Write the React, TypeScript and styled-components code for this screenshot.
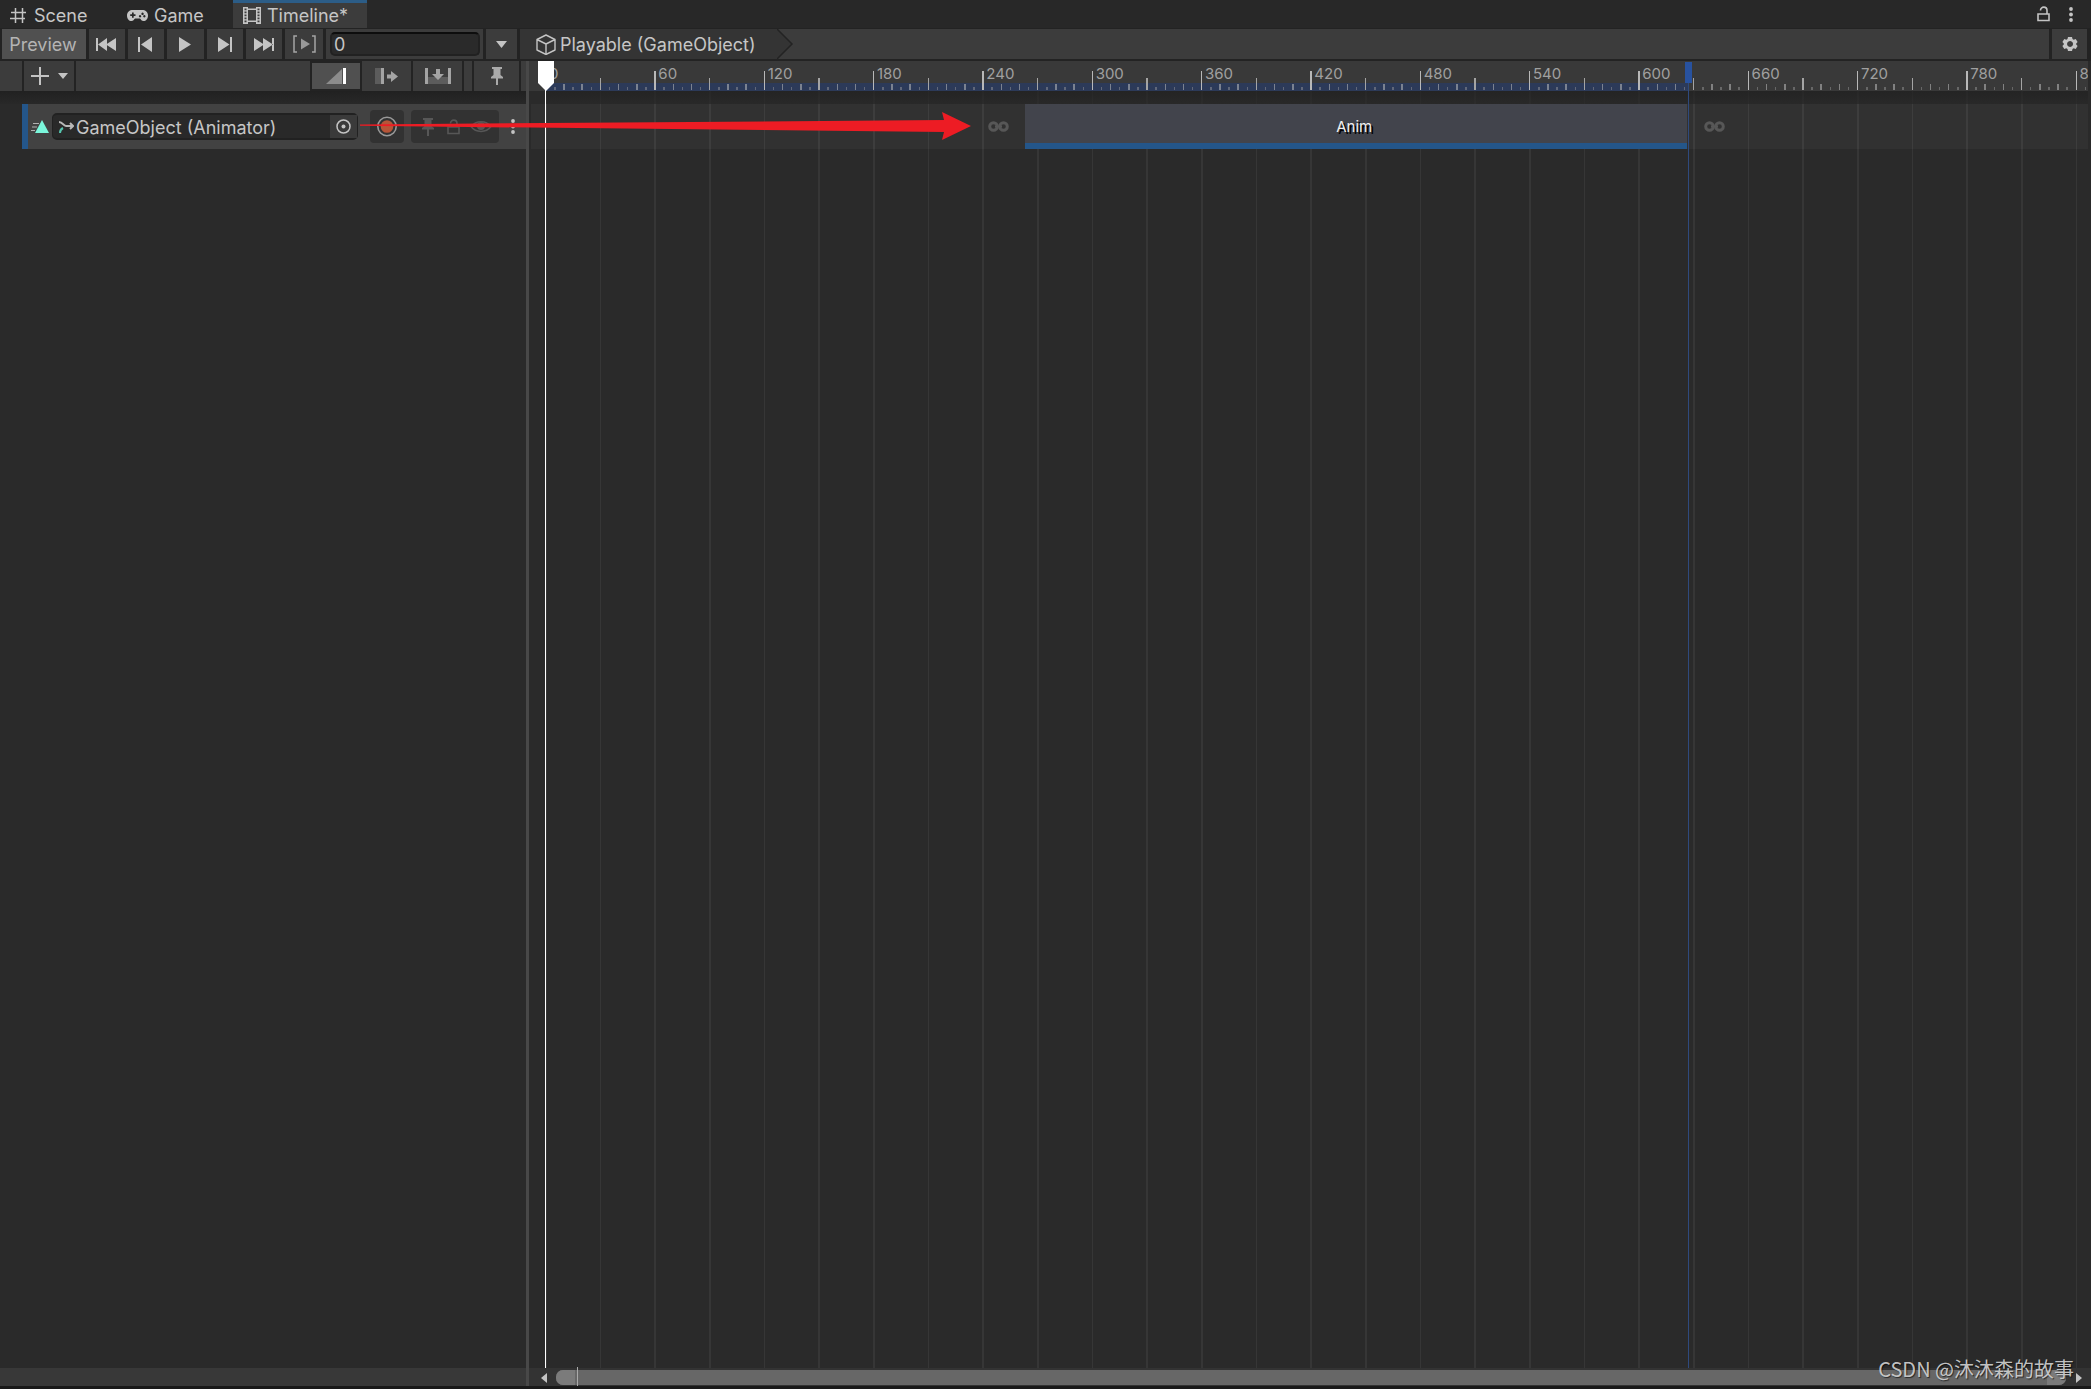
import React from "react";
import styled, { createGlobalStyle } from "styled-components";

const VISIBLE_FRAMES = 846.7;
const SEGMENT = 60;
const CLIP = { start: 263.4, end: 626.9, name: "Anim" };
const DURATION = 627.2;
const pct = (frames: number) => `${(frames / VISIBLE_FRAMES) * 100}%`;
const SEGMENTS = Array.from({ length: 15 }, (_, i) => i * SEGMENT);

const c = {
  bar: "#3c3c3c",
  gap: "#232323",
  body: "#2a2a2a",
  lit: "#505050",
  text: "#c6c6c6",
  icon: "#c4c4c4",
  accent: "#24568a",
};

const Global = createGlobalStyle`
  * { box-sizing: border-box; }
  body { margin: 0; background: #191919; }
  button, input { font: inherit; color: inherit; border: 0; padding: 0; margin: 0; background: none; }
  svg { display: block; flex: none; }
`;

const Window = styled.div`
  position: relative;
  display: flex;
  flex-direction: column;
  min-height: 100vh;
  padding-bottom: 3px;
  overflow: hidden;
  background: #191919;
  color: ${c.text};
  font: 18px/24px Inter, "Noto Sans CJK SC", sans-serif;
`;

const Tabs = styled.div`
  display: flex;
  height: 28px;
  padding-right: 13px;
  background: #282828;
`;
const Tab = styled.button<{ $active?: boolean; $width: number }>`
  display: flex;
  align-items: center;
  gap: 6px;
  width: ${(p) => p.$width}px;
  height: 28px;
  padding: 3px 0 0 10px;
  white-space: nowrap;
  background: ${(p) => (p.$active ? c.bar : "transparent")};
  box-shadow: ${(p) => (p.$active ? "inset 0 3px 0 #2c5d87" : "none")};
`;
const TabTools = styled.div`
  display: flex;
  align-items: center;
  gap: 14px;
  margin-left: auto;
`;
const IconButton = styled.button`
  display: grid;
  place-items: center;
`;

const Toolbar = styled.div`
  display: flex;
  gap: 3px;
  height: 33px;
  padding: 1px 4px 2px 2px;
  background: ${c.gap};
`;
const ToolButton = styled.button<{ $width: number; $lit?: boolean }>`
  display: grid;
  place-items: center;
  flex: none;
  width: ${(p) => p.$width}px;
  background: ${(p) => (p.$lit ? c.lit : c.bar)};
`;
const PreviewButton = styled(ToolButton)`
  padding: 2px 2px 0 0;
  color: #b4b4b4;
`;
const FrameSlot = styled.label`
  display: flex;
  flex: none;
  width: 157px;
  padding: 3px 3px 3px 4px;
  background: ${c.bar};
`;
const FrameInput = styled.input`
  width: 100%;
  border: 2px solid #212121;
  border-top-color: #0d0d0d;
  border-radius: 5px;
  background: #2a2a2a;
  padding: 2px 0 0 2px;
`;
const Crumbs = styled.nav`
  display: flex;
  flex: 1;
  min-width: 0;
  background: ${c.bar};
`;
const Crumb = styled.a`
  display: flex;
  align-items: center;
  gap: 4px;
  width: 257px;
  padding: 1px 0 0 16px;
  background: #343434;
  color: inherit;
  text-decoration: none;
  white-space: nowrap;
`;

const Main = styled.div`
  display: flex;
  flex: 1;
`;
const Side = styled.div`
  display: flex;
  flex-direction: column;
  flex: none;
  width: 526px;
  background: ${c.body};
`;
const Divider = styled.div`
  flex: none;
  width: 3px;
  background: #484848;
`;
const SideTools = styled.div`
  display: flex;
  gap: 2px;
  height: 30px;
  background: ${c.gap};
`;
const Filler = styled.div<{ $width?: number }>`
  flex: ${(p) => (p.$width ? "none" : 1)};
  width: ${(p) => (p.$width ? `${p.$width}px` : "auto")};
  background: ${c.bar};
`;
const ModeButton = styled(ToolButton)`
  background-clip: content-box;
  padding: ${(p) => (p.$lit ? "2px 0" : "0")};
`;
const Shade = styled.div`
  height: 13px;
  background: linear-gradient(#212121, #282828);
`;
const TrackHeader = styled.div`
  display: flex;
  align-items: center;
  height: 45px;
  margin-left: 22px;
  padding: 0 6px 0 3px;
  border-left: 6px solid ${c.accent};
  background: #424242;
`;
const Binding = styled.label`
  display: flex;
  align-items: center;
  width: 306px;
  height: 27px;
  margin-left: 3px;
  padding-left: 6px;
  border: 2px solid #212121;
  border-width: 2px 1px;
  border-radius: 5px;
  background: #292929;
`;
const BindingInput = styled.input`
  flex: 1;
  min-width: 0;
  height: 23px;
  padding-top: 2px;
  margin-left: 2px;
`;
const Picker = styled(IconButton)`
  width: 27px;
  height: 23px;
  background: #3a3a3a;
`;
const Chip = styled.div`
  display: flex;
  align-items: center;
  justify-content: center;
  gap: 9px;
  height: 33px;
  padding: 0 7px;
  border-radius: 4px;
  background: #323232;
`;
const RecordChip = styled(Chip)`
  margin: 0 7px 0 12px;
`;
const Menu = styled(IconButton)`
  margin-left: auto;
  width: 14px;
`;
const SideFoot = styled.div`
  height: 18px;
  margin-top: auto;
  background: #383838;
`;

const Pane = styled.div`
  display: flex;
  flex-direction: column;
  flex: 1;
  min-width: 0;
  background: ${c.body};
`;
const Canvas = styled.div`
  position: relative;
  flex: 1;
  margin: 0 3px 0 16px;
`;
const Ruler = styled.div`
  position: relative;
  height: 30px;
  margin: 0 0 0 -16px;
  padding-left: 16px;
  background: #393939;
`;
const Scale = styled.div`
  position: relative;
  display: flex;
  height: 30px;
  overflow: hidden;
`;
const Span = styled.div`
  position: absolute;
  bottom: 0;
  left: 0;
  height: 8px;
  background: #2c3a59;
`;
const Segment = styled.div`
  position: relative;
  display: grid;
  grid-template-columns: repeat(12, 1fr);
  align-items: end;
  flex: none;
  height: 29px;
`;
const Tick = styled.i<{ $h: number; $c: string }>`
  width: 16%;
  height: ${(p) => p.$h}px;
  background: ${(p) => p.$c};
`;
const TickLabel = styled.span`
  position: absolute;
  top: 3px;
  left: 4px;
  font-size: 15px;
  line-height: 20px;
  color: #a0a0a0;
`;
const GridLines = styled.div`
  position: absolute;
  inset: 30px 0 0 0;
  display: flex;
  overflow: hidden;
`;
const GridCell = styled.div`
  display: grid;
  grid-template-columns: 1fr 1fr;
  flex: none;
`;
const GridLine = styled.i`
  width: 3%;
  background: #363636;
`;
const Lane = styled.div`
  position: relative;
  display: flex;
  height: 45px;
  margin-left: -14px;
  padding-left: 14px;
  background: rgba(255, 255, 255, 0.035);
`;
const Lead = styled.div`
  display: flex;
  align-items: center;
  justify-content: flex-end;
  padding-right: 16px;
`;
const Tail = styled.div`
  display: flex;
  align-items: center;
  flex: 1;
  padding-left: 17px;
`;
const ClipBox = styled.button`
  display: grid;
  place-items: center;
  border-bottom: 6px solid ${c.accent};
  background: #42444c;
  padding: 7px 4px 0 0;
  color: #f0f0f0;
  font-size: 15px;
  line-height: 20px;
  text-shadow: 2px 2px 0 #000;
`;
const Playhead = styled.div`
  position: absolute;
  z-index: 2;
  inset: 0 auto 0 -7px;
  width: 16px;
  background: linear-gradient(#fff, #fff) 7px 0 / 1px 100% no-repeat;
`;
const EndMarker = styled.div`
  position: absolute;
  top: 1px;
  bottom: 0;
  width: 7px;
  margin-left: -3px;
  background: linear-gradient(#28529f, #28529f) 0 0 / 7px 21px no-repeat,
    linear-gradient(#2f4a7d, #2f4a7d) 3px 0 / 1px 100% no-repeat;
`;

const ScrollBar = styled.div`
  display: flex;
  align-items: center;
  height: 18px;
  padding: 1px 8px 0 11px;
  background: #333;
`;
const Thumb = styled.div`
  display: flex;
  justify-content: space-between;
  flex: 1;
  height: 15px;
  margin: 0 9px 0 8px;
  border-radius: 7px;
  overflow: hidden;
  background: #676767;
`;
const Grip = styled.i`
  width: 19px;
  background: #7b7b7b;
`;
const ScrollMark = styled.i`
  position: absolute;
  left: 32px;
  bottom: -18px;
  width: 1px;
  height: 19px;
  background: #aaa;
`;
const Arrow = styled.svg`
  position: absolute;
  z-index: 3;
  left: 360px;
  top: 111px;
  pointer-events: none;
`;
const Watermark = styled.div`
  position: absolute;
  z-index: 4;
  right: 17px;
  bottom: 6px;
  color: rgba(215, 215, 215, 0.9);
  font: 20px/28px "Noto Sans CJK SC", sans-serif;
  text-shadow: 1px 1px 1px rgba(0, 0, 0, 0.6);
`;

const Svg = ({ w, h, children }: { w: number; h: number; children: React.ReactNode }) => (
  <svg width={w} height={h} viewBox={`0 0 ${w} ${h}`} fill={c.icon} aria-hidden="true">
    {children}
  </svg>
);

const HashIcon = () => (
  <Svg w={18} h={16}>
    <path d="M5.500 0v15M12.500 0v15M1 4.500h15M0 10.500h15" stroke={c.icon} strokeWidth="1.500" />
  </Svg>
);
const PadIcon = () => (
  <Svg w={21} h={13}>
    <path fillRule="evenodd" d="M6 1h9c3.500 0 6 2 6 5.500S19 12 16.500 12c-1.800 0-2.600-1.500-3.500-2.500H8C7 10.500 6.200 12 4.500 12 2 12 0 10 0 6.500S2.500 1 6 1zM5 3.500v1.800H3.200v1.700H5v1.800h1.700V7h1.800V5.300H6.700V3.500zM15.500 3.600a1.200 1.200 0 1 0 .1 0zM13 6a1.200 1.200 0 1 0 .1 0zM17.300 6a1.200 1.200 0 1 0 .1 0z" />
  </Svg>
);
const FilmIcon = () => (
  <Svg w={18} h={17}>
    <path fillRule="evenodd" d="M0 0h5v1.500h8V0h5v17h-5v-2H5v2H0zM1.500 1.500v1.700h2V1.500zm0 3v1.700h2V4.500zm0 3v1.700h2V7.500zm0 3v1.700h2v-1.700zm0 3v1.700h2v-1.700zM14.500 1.500v1.700h2V1.500zm0 3v1.700h2V4.500zm0 3v1.700h2V7.500zm0 3v1.700h2v-1.700zm0 3v1.700h2v-1.700zM5 3v10.500h8V3z" />
  </Svg>
);
const LockIcon = ({ dim }: { dim?: boolean }) => (
  <Svg w={13} h={16}>
    <path d="M1 8h11v6.500H1z M3.500 4.500C3.500 0 10 0 10 4.500V8" fill="none" stroke={dim ? "#575757" : c.icon} strokeWidth="1.600" />
  </Svg>
);
const Kebab = () => (
  <Svg w={4} h={15}>
    <circle cx="2" cy="2" r="1.900" />
    <circle cx="2" cy="7.500" r="1.900" />
    <circle cx="2" cy="13" r="1.900" />
  </Svg>
);
const PinIcon = ({ dim }: { dim?: boolean }) => (
  <Svg w={12} h={18}>
    <path fill={dim ? "#575757" : "#aaa"} d="M1 0h10v2H9.500v6l2.500 2v1.500H7V18H5v-6.500H0V10l2.500-2V2H1z" />
  </Svg>
);
const Down = () => (
  <Svg w={11} h={7}>
    <path d="M0 0h11L5.500 7z" />
  </Svg>
);
const CubeIcon = () => (
  <Svg w={20} h={21}>
    <path d="M10 1l9 4.500v10.500l-9 4.500-9-4.500V5.500zM1 5.500l9 4.500 9-4.500M10 10v10.500" fill="none" stroke={c.icon} strokeWidth="1.400" strokeLinejoin="round" />
  </Svg>
);
const GearIcon = () => (
  <Svg w={16} h={16}>
    <path fillRule="evenodd" d="M6 1h4l.5 2 1.200.7 2-.7 1.900 3.100L14.200 7.500v1l1.400 1.400-1.900 3.100-2-.7-1.200.7L10 15H6l-.5-2-1.200-.7-2 .7L.4 9.900l1.400-1.400v-1L.4 6.100 2.300 3l2 .7L5.500 3zM8 5a3 3 0 1 0 .1 0z" />
  </Svg>
);
const Infinity8 = () => (
  <Svg w={21} h={11}>
    <g fill="none" stroke="#575757" strokeWidth="3">
      <circle cx="5.500" cy="5.500" r="3.800" />
      <circle cx="15.500" cy="5.500" r="3.800" />
      <path d="M7 5.500h7" strokeWidth="2" />
    </g>
  </Svg>
);

const transport: { label: string; width: number; icon: React.ReactNode }[] = [
  { label: "Go to start", width: 36, icon: <Svg w={22} h={13}><path d="M0 0h2v13H0zM11 0v13L2 6.500zM20 0v13l-10-6.500z" /></Svg> },
  { label: "Previous frame", width: 36, icon: <Svg w={16} h={15}><path d="M0 0h2v15H0zM14 0v15L3 7.500z" /></Svg> },
  { label: "Play", width: 37, icon: <Svg w={14} h={15}><path d="M0 0v15l12-7.500z" /></Svg> },
  { label: "Next frame", width: 36, icon: <Svg w={15} h={15}><path d="M12 0h2v15h-2zM0 0v15l11.500-7.500z" /></Svg> },
  { label: "Go to end", width: 36, icon: <Svg w={21} h={13}><path d="M18 0h2v13h-2zM0 0v13l10-6.500zM9 0v13l10-6.500z" /></Svg> },
  {
    label: "Play range",
    width: 38,
    icon: (
      <Svg w={23} h={18}>
        <path d="M4 1H1v16h3M19 1h3v16h-3" fill="none" stroke="#a4a4a4" strokeWidth="1.500" />
        <path d="M8 3.500v11l9-5.500z" fill="#999" />
      </Svg>
    ),
  },
];

const tickStyle = (i: number) =>
  i === 0 ? { h: 19, k: "#b8b8b8" } : i === 6 ? { h: 12, k: "#a4a4a4" } : i % 2 === 0 ? { h: 6, k: "rgba(190,190,190,.55)" } : { h: 3, k: "rgba(160,160,160,.45)" };

export default function App() {
  return (
    <Window>
      <Global />
      <Tabs role="tablist">
        <Tab role="tab" $width={117}><HashIcon />Scene</Tab>
        <Tab role="tab" $width={116}><PadIcon />Game</Tab>
        <Tab role="tab" $width={134} $active aria-selected><FilmIcon />Timeline*</Tab>
        <TabTools>
          <IconButton aria-label="Lock"><LockIcon /></IconButton>
          <Menu aria-label="Window menu"><Kebab /></Menu>
        </TabTools>
      </Tabs>
      <Toolbar>
        <PreviewButton $width={84} $lit>Preview</PreviewButton>
        {transport.map((t) => (
          <ToolButton key={t.label} $width={t.width} aria-label={t.label}>{t.icon}</ToolButton>
        ))}
        <FrameSlot><FrameInput aria-label="Current frame" defaultValue="0" /></FrameSlot>
        <ToolButton $width={31} aria-label="Select timeline"><Down /></ToolButton>
        <Crumbs>
          <Crumb href="#playable"><CubeIcon />Playable (GameObject)</Crumb>
          <svg width="17" height="30" viewBox="0 0 17 30" aria-hidden="true">
            <path d="M0 0L15 15 0 30" fill="#343434" stroke="#232323" strokeWidth="1.500" />
          </svg>
        </Crumbs>
        <ToolButton $width={35} aria-label="Timeline settings"><GearIcon /></ToolButton>
      </Toolbar>
      <Main>
        <Side>
          <SideTools>
            <Filler $width={22} />
            <ToolButton $width={50} aria-label="Add track">
              <Svg w={37} h={18}>
                <path d="M0 8h8V0h2v8h8v2h-8v8H8v-8H0zM27 6h10l-5 6z" />
              </Svg>
            </ToolButton>
            <Filler />
            <ModeButton $width={48} $lit aria-label="Mix mode">
              <Svg w={20} h={16}>
                <path d="M0 16L16 1v15z" fill="#8c8c8c" />
                <path d="M17 0h3v16h-3z" fill="#fff" />
              </Svg>
            </ModeButton>
            <ModeButton $width={49} aria-label="Ripple mode">
              <Svg w={23} h={16}>
                <path d="M0 0h6v16H0z" fill="#5c5c5c" />
                <path d="M6 0h3v16H6zM12 6.500h4V3l7 5.500-7 5.500v-3.500h-4z" fill="#a4a4a4" />
              </Svg>
            </ModeButton>
            <ModeButton $width={49} aria-label="Replace mode">
              <Svg w={26} h={16}>
                <path d="M3 9h20v7H3z" fill="#5c5c5c" />
                <path d="M0 0h3v16H0zM23 0h3v16h-3zM11 1h4v5h4l-6 6-6-6h4z" fill="#a4a4a4" />
              </Svg>
            </ModeButton>
            <Filler $width={8} />
            <ToolButton $width={45} aria-label="Show markers"><PinIcon /></ToolButton>
            <Filler $width={5} />
          </SideTools>
          <Shade />
          <TrackHeader>
            <Svg w={18} h={15}>
              <path d="M11 1l7 13H4z" fill="#7bf7dc" />
              <path d="M2 4.500h6M1 8h5M0 11.500h4" stroke="#b0b0b0" strokeWidth="1.200" />
            </Svg>
            <Binding>
              <Svg w={15} h={14}>
                <path d="M0 2c4 0 4 4 7 4h7M11 3l3 3-3 3" fill="none" stroke="#b8b8b8" strokeWidth="2" />
                <path d="M1 13c0-3 1-4 3-5" fill="none" stroke="#56c4ae" strokeWidth="2" />
              </Svg>
              <BindingInput aria-label="Bound object" readOnly value="GameObject (Animator)" />
              <Picker aria-label="Pick object">
                <Svg w={15} h={15}>
                  <circle cx="7.500" cy="7.500" r="6.500" fill="none" stroke={c.icon} strokeWidth="1.500" />
                  <circle cx="7.500" cy="7.500" r="2" />
                </Svg>
              </Picker>
            </Binding>
            <RecordChip>
              <IconButton aria-label="Record">
                <Svg w={20} h={21}>
                  <circle cx="10" cy="10.500" r="9.200" fill="none" stroke="#999" strokeWidth="1.600" />
                  <circle cx="10" cy="10.500" r="6.300" fill="#b65538" />
                </Svg>
              </IconButton>
            </RecordChip>
            <Chip>
              <IconButton aria-label="Track markers">
                <Svg w={20} h={18}><g transform="translate(4 0)"><path fill="#575757" d="M1 0h10v2H9.500v6l2.500 2v1.500H7V18H5v-6.500H0V10l2.500-2V2H1z" /></g></Svg>
              </IconButton>
              <IconButton aria-label="Lock track"><LockIcon dim /></IconButton>
              <IconButton aria-label="Mute track">
                <Svg w={23} h={13}>
                  <path d="M2 6.500C7 0 17 0 22 6.500 17 13 7 13 2 6.500z" fill="none" stroke="#575757" strokeWidth="1.500" />
                  <circle cx="12" cy="6" r="4" fill="#575757" />
                </Svg>
              </IconButton>
            </Chip>
            <Menu aria-label="Track menu"><Kebab /></Menu>
          </TrackHeader>
          <SideFoot />
        </Side>
        <Divider />
        <Pane>
          <Canvas>
            <GridLines>
              {SEGMENTS.map((f) => (
                <GridCell key={f} style={{ width: pct(SEGMENT) }}><GridLine /><GridLine /></GridCell>
              ))}
            </GridLines>
            <Ruler>
              <Scale>
                <Span style={{ width: pct(DURATION) }} />
                {SEGMENTS.map((f) => (
                  <Segment key={f} style={{ width: pct(SEGMENT) }}>
                    {Array.from({ length: 12 }, (_, i) => {
                      const t = tickStyle(i);
                      return <Tick key={i} $h={t.h} $c={t.k} />;
                    })}
                    <TickLabel>{f}</TickLabel>
                  </Segment>
                ))}
              </Scale>
            </Ruler>
            <Shade style={{ opacity: 0.7 }} />
            <Lane>
              <Lead style={{ width: pct(CLIP.start) }}><Infinity8 /></Lead>
              <ClipBox style={{ width: pct(CLIP.end - CLIP.start) }}>{CLIP.name}</ClipBox>
              <Tail><Infinity8 /></Tail>
            </Lane>
            <EndMarker style={{ left: pct(DURATION) }} />
            <Playhead>
              <svg width="16" height="30" viewBox="0 0 16 30" aria-hidden="true">
                <path d="M0 0h16v22l-8 8-8-8z" fill="#fff" />
              </svg>
            </Playhead>
            <ScrollMark />
          </Canvas>
          <ScrollBar>
            <IconButton aria-label="Scroll left"><Svg w={8} h={10}><path d="M7 0v10L1 5z" /></Svg></IconButton>
            <Thumb><Grip /><Grip /></Thumb>
            <IconButton aria-label="Scroll right"><Svg w={8} h={10}><path d="M1 0v10l6-5z" /></Svg></IconButton>
          </ScrollBar>
        </Pane>
      </Main>
      <Arrow width="612" height="30" viewBox="0 0 612 30" aria-hidden="true">
        <path d="M0 13.500L584 9 582 1 611 15 582 29 584 21 0 14.800z" fill="#ed1c24" />
      </Arrow>
      <Watermark>CSDN @沐沐森的故事</Watermark>
    </Window>
  );
}
